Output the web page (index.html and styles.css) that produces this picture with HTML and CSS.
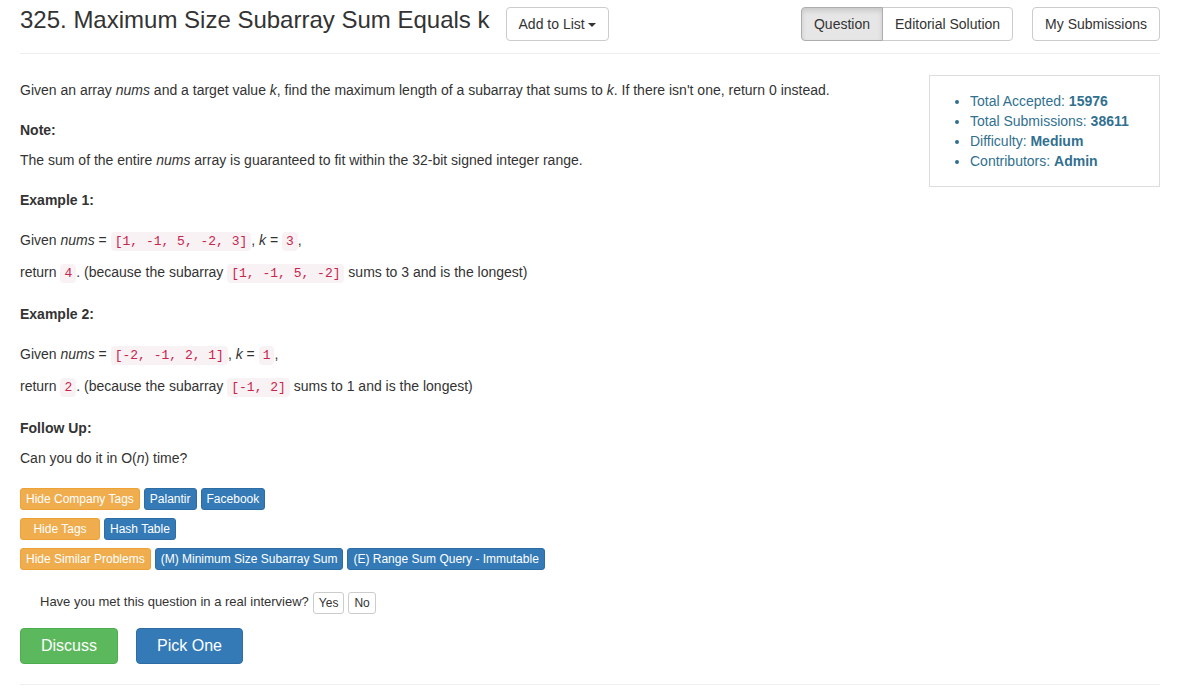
FILE: index.html
```html
<!DOCTYPE html>
<html lang="en">
<head>
<meta charset="utf-8">
<title>325. Maximum Size Subarray Sum Equals k</title>
<link rel="stylesheet" href="styles.css">
</head>
<body>
<main class="page">
  <header class="title-bar">
    <h1 class="title">325. Maximum Size Subarray Sum Equals k</h1>
    <button type="button" class="btn btn-default" aria-haspopup="true">Add to List<span class="caret"></span></button>
    <nav class="views">
      <div class="btn-group">
        <a href="#question" class="btn btn-default active" aria-current="page">Question</a>
        <a href="#solution" class="btn btn-default">Editorial Solution</a>
      </div>
      <a href="#submissions" class="btn btn-default">My Submissions</a>
    </nav>
  </header>

  <div class="content">
    <article class="question" id="question">
      <p>Given an array <i>nums</i> and a target value <i>k</i>, find the maximum length of a subarray that sums to <i>k</i>. If there isn't one, return 0 instead.</p>
      <h2 class="heading">Note:</h2>
      <p>The sum of the entire <i>nums</i> array is guaranteed to fit within the 32-bit signed integer range.</p>
      <h2 class="heading spaced">Example 1:</h2>
      <p class="with-code">Given <i>nums</i> = <code>[1, -1, 5, -2, 3]</code>, <i>k</i> = <code>3</code>,</p>
      <p class="with-code">return <code>4</code>. (because the subarray <code>[1, -1, 5, -2]</code> sums to 3 and is the longest)</p>
      <h2 class="heading spaced">Example 2:</h2>
      <p class="with-code">Given <i>nums</i> = <code>[-2, -1, 2, 1]</code>, <i>k</i> = <code>1</code>,</p>
      <p class="with-code">return <code>2</code>. (because the subarray <code>[-1, 2]</code> sums to 1 and is the longest)</p>
      <h2 class="heading">Follow Up:</h2>
      <p>Can you do it in O(<i>n</i>) time?</p>
    </article>
    <aside class="stats">
      <ul>
        <li>Total Accepted: <strong>15976</strong></li>
        <li>Total Submissions: <strong>38611</strong></li>
        <li>Difficulty: <strong>Medium</strong></li>
        <li>Contributors: <strong>Admin</strong></li>
      </ul>
    </aside>
  </div>

  <section class="tags">
    <div class="tag-row">
      <button type="button" class="btn btn-xs btn-warning">Hide Company Tags</button>
      <a href="#palantir" class="btn btn-xs btn-primary">Palantir</a>
      <a href="#facebook" class="btn btn-xs btn-primary">Facebook</a>
    </div>
    <div class="tag-row">
      <button type="button" class="btn btn-xs btn-warning">Hide Tags</button>
      <a href="#hash-table" class="btn btn-xs btn-primary">Hash Table</a>
    </div>
    <div class="tag-row">
      <button type="button" class="btn btn-xs btn-warning">Hide Similar Problems</button>
      <a href="#minimum-size" class="btn btn-xs btn-primary">(M) Minimum Size Subarray Sum</a>
      <a href="#range-sum" class="btn btn-xs btn-primary">(E) Range Sum Query - Immutable</a>
    </div>
  </section>

  <div class="interview">
    <span>Have you met this question in a real interview?</span>
    <button type="button" class="btn btn-xs btn-default">Yes</button>
    <button type="button" class="btn btn-xs btn-default">No</button>
  </div>

  <div class="actions">
    <a href="#discuss" class="btn btn-lg btn-success">Discuss</a>
    <a href="#pick" class="btn btn-lg btn-primary">Pick One</a>
  </div>
</main>
</body>
</html>
```
FILE: styles.css
```css
* { box-sizing: border-box; }

body {
  margin: 0;
  background: #fff;
  color: #333;
  font: 14px/20px "Liberation Sans", Arial, sans-serif;
}

.page { padding: 0 24px 0 20px; }

.title-bar {
  display: flex;
  align-items: flex-start;
  gap: 16px;
  padding: 7px 0 12px;
  border-bottom: 1px solid #eee;
}
.title {
  margin: 0;
  font-size: 24px;
  font-weight: 400;
  line-height: 26px;
}

.btn {
  display: inline-block;
  padding: 6px 12px;
  border: 1px solid transparent;
  border-radius: 4px;
  font: 14px/20px "Liberation Sans", Arial, sans-serif;
  text-align: center;
  text-decoration: none;
  white-space: nowrap;
  cursor: pointer;
}
.btn-default { background: #fff; border-color: #ccc; color: #333; }
.btn-primary { background: #337ab7; border-color: #2e6da4; color: #fff; }
.btn-warning { background: #f0ad4e; border-color: #eea236; color: #fff; }
.btn-success { background: #5cb85c; border-color: #4cae4c; color: #fff; }
.btn-xs { padding: 1px 5px; border-radius: 3px; font-size: 12px; line-height: 18px; }
.btn-lg { padding: 6px 20px; font-size: 16px; line-height: 22px; }
.btn.active {
  background: #e6e6e6;
  border-color: #adadad;
  box-shadow: inset 0 3px 5px rgba(0, 0, 0, .125);
}

.caret {
  display: inline-block;
  margin-left: 3px;
  vertical-align: middle;
  border-top: 4px solid;
  border-right: 4px solid transparent;
  border-left: 4px solid transparent;
}

.views { display: flex; gap: 19px; margin-left: auto; }
.btn-group { display: flex; }
.btn-group .btn:first-child { position: relative; border-radius: 4px 0 0 4px; }
.btn-group .btn:last-child { margin-left: -1px; border-radius: 0 4px 4px 0; }
.btn-group .active { z-index: 1; }

.content {
  display: flex;
  align-items: flex-start;
  gap: 30px;
  padding-top: 21px;
}
.question { flex: 1; padding-top: 5px; }
.question p { margin: 0 0 10px; }
.heading { margin: 20px 0 10px; font-size: 14px; line-height: 20px; }
.spaced { margin-bottom: 20px; }
.question .with-code { padding-bottom: 2px; }

code {
  padding: 2px 4px;
  border-radius: 4px;
  background: #f9f2f4;
  color: #c7254e;
  font: 13px/14px "Liberation Mono", "Courier New", monospace;
}

.stats {
  flex: 0 0 231px;
  padding: 15px 0;
  border: 1px solid #ddd;
  color: #31708f;
}
.stats ul { margin: 0; padding-left: 40px; }

.tags { display: grid; gap: 8px; padding-top: 10px; }
.tag-row { display: flex; flex-wrap: wrap; gap: 4px; }
.tag-row .btn-warning { min-width: 80px; }

.interview {
  display: flex;
  gap: 4px;
  padding: 22px 0 0 20px;
  font-size: 13px;
}

.actions {
  display: flex;
  gap: 18px;
  padding: 14px 0 20px;
  border-bottom: 1px solid #eee;
}
```
